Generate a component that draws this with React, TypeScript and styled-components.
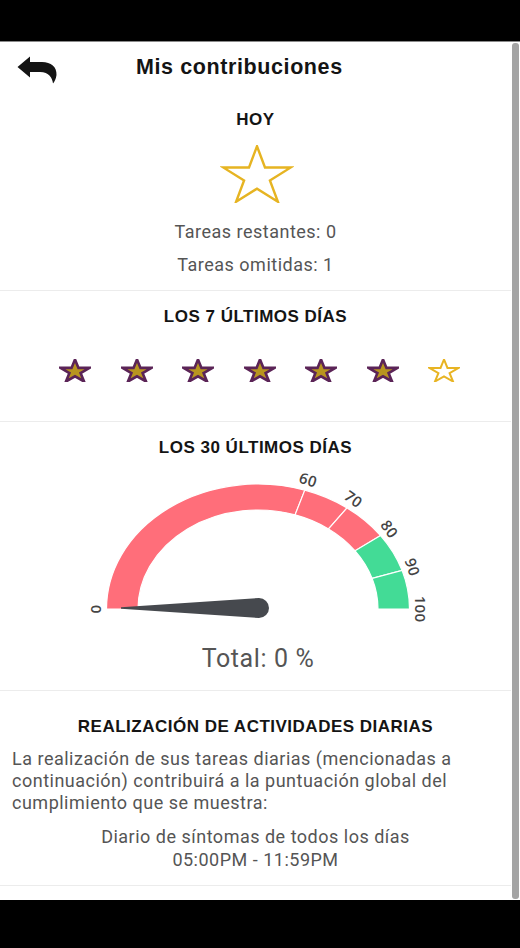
import styled, { createGlobalStyle } from "styled-components";

const GlobalStyle = createGlobalStyle`
  html, body {
    margin: 0;
    background: #000;
  }
  body {
    font-family: Roboto, "Liberation Sans", sans-serif;
  }
`;

const Screen = styled.div`
  margin-top: 41px;
  height: 859px;
  box-sizing: border-box;
  background: #fff;
  border-top: 1px solid #8a8a8a;
  display: flex;
  overflow: hidden;
`;

const Content = styled.main`
  flex: 1;
  min-width: 0;
`;

const ScrollTrack = styled.div`
  width: 9px;
  padding: 1px;
  box-sizing: border-box;
`;

const ScrollThumb = styled.div`
  width: 7px;
  height: 100%;
  border-radius: 3px;
  background: #a4a4a4;
`;

const Header = styled.header`
  height: 50px;
  display: flex;
  align-items: center;
  padding-left: 17px;
  gap: 79px;
`;

const BackButton = styled.button`
  border: 0;
  background: none;
  padding: 0;
  margin-top: 5px;
  display: flex;
  cursor: pointer;
`;

const Title = styled.h1`
  margin: 0;
  font-family: "Liberation Sans", Arial, sans-serif;
  font-size: 21.5px;
  letter-spacing: 0.6px;
  font-weight: 700;
  color: #141414;
`;

const Section = styled.section<{ $pt: number; $pb: number }>`
  border-bottom: 1px solid #ececec;
  padding: ${(p) => p.$pt}px 12px ${(p) => p.$pb}px;
  display: flex;
  flex-direction: column;
`;

const SectionTitle = styled.h2`
  margin: 0;
  height: 20px;
  line-height: 20px;
  text-align: center;
  font-family: "Liberation Sans", Arial, sans-serif;
  font-size: 17px;
  letter-spacing: 0.5px;
  font-weight: 700;
  color: #141414;
`;

const BigStarWrap = styled.div`
  margin: 15px auto 0;
  display: flex;
  transform: translateX(1px);
`;

const Stat = styled.p<{ $mt: number }>`
  margin: ${(p) => p.$mt}px 0 0;
  line-height: 20px;
  text-align: center;
  font-size: 18px;
  letter-spacing: 0.5px;
  color: #555;
`;

const StarRow = styled.div`
  margin-top: 32px;
  display: flex;
  justify-content: center;
  gap: 29.5px;
  padding-left: 8px;
`;

const GaugeBox = styled.div`
  margin: 2px -12px 0;
  display: flex;
`;

const Total = styled.div`
  margin-top: 15px;
  line-height: 28px;
  text-align: center;
  font-size: 25px;
  letter-spacing: 0.6px;
  color: #555;
  padding-left: 5px;
`;

const Paragraph = styled.p`
  margin: 11px 0 0;
  font-size: 18px;
  letter-spacing: 0.5px;
  line-height: 22px;
  color: #555;
`;

const Schedule = styled.div`
  margin-top: 11px;
  text-align: center;
  font-size: 18px;
  letter-spacing: 0.5px;
  line-height: 23px;
  color: #555;
`;

const STAR_POINTS =
  "50,0 61.23,34.55 97.55,34.55 68.17,55.9 79.39,90.45 50,69.1 20.61,90.45 31.83,55.9 2.45,34.55 38.77,34.55";

function Star({
  w,
  h,
  fill,
  stroke,
  sw,
}: {
  w: number;
  h: number;
  fill: string;
  stroke: string;
  sw: number;
}) {
  return (
    <svg width={w} height={h} viewBox="-2 -2 104 94.5" preserveAspectRatio="none">
      <polygon
        points={STAR_POINTS}
        fill={fill}
        stroke={stroke}
        strokeWidth={sw}
        strokeLinejoin="miter"
        vectorEffect="non-scaling-stroke"
      />
    </svg>
  );
}

function BackArrow() {
  return (
    <svg width="40" height="28" viewBox="0 0 40 28">
      <path
        d="M0.5 11 L13 0.5 L13 6 L25 6 C34 6 40 11 39.5 19 C39 23 37.5 25.5 36 27.5 C35.5 22 32 16 23 16 L13 16 L13 21.5 Z"
        fill="#141414"
      />
    </svg>
  );
}

const CX = 258;
const CY = 149;
const RX = 151.5;
const RY = 125;
const IRX = 120;
const IRY = 99;

const pt = (v: number, rx: number, ry: number) => {
  const a = Math.PI * (1 - v / 100);
  return [CX + rx * Math.cos(a), CY - ry * Math.sin(a)];
};

const segPath = (a: number, b: number) => {
  const [x1, y1] = pt(a, RX, RY);
  const [x2, y2] = pt(b, RX, RY);
  const [x3, y3] = pt(b, IRX, IRY);
  const [x4, y4] = pt(a, IRX, IRY);
  return `M${x1} ${y1} A${RX} ${RY} 0 0 1 ${x2} ${y2} L${x3} ${y3} A${IRX} ${IRY} 0 0 0 ${x4} ${y4} Z`;
};

const segments = [
  { from: 0, to: 60, color: "#ff6e7a" },
  { from: 60, to: 70, color: "#ff6e7a" },
  { from: 70, to: 80, color: "#ff6e7a" },
  { from: 80, to: 90, color: "#43db96" },
  { from: 90, to: 100, color: "#43db96" },
];

const labels = [0, 60, 70, 80, 90, 100];

function Gauge() {
  return (
    <svg width="511" height="170" viewBox="0 0 511 170">
      {segments.map((s) => (
        <path key={s.from} d={segPath(s.from, s.to)} fill={s.color} stroke="#fff" strokeWidth="1.2" />
      ))}
      {labels.map((v) => {
        const [x, y] = pt(v, RX + 11.5, RY + 11.5);
        const r = 1.8 * v - 90;
        return (
          <text
            key={v}
            x={x}
            y={y}
            transform={`rotate(${r} ${x} ${y})`}
            textAnchor="middle"
            dominantBaseline="central"
            fontFamily="'Open Sans', Roboto, sans-serif"
            fontWeight="600"
            fontSize="15"
            letterSpacing="0.3"
            fill="#444"
          >
            {v}
          </text>
        );
      })}
      <path d="M121 147.2 L259 138 A10 10 0 1 1 259 158 L121 148.8 Z" fill="#46494e" />
    </svg>
  );
}

export default function App() {
  return (
    <>
      <GlobalStyle />
      <Screen>
        <Content>
          <Header>
            <BackButton aria-label="Volver">
              <BackArrow />
            </BackButton>
            <Title>Mis contribuciones</Title>
          </Header>

          <Section $pt={18} $pb={15}>
            <SectionTitle>HOY</SectionTitle>
            <BigStarWrap>
              <Star w={74} h={58} fill="#fff" stroke="#e6b422" sw={2.4} />
            </BigStarWrap>
            <Stat $mt={19}>Tareas restantes: 0</Stat>
            <Stat $mt={13}>Tareas omitidas: 1</Stat>
          </Section>

          <Section $pt={16} $pb={39}>
            <SectionTitle>LOS 7 ÚLTIMOS DÍAS</SectionTitle>
            <StarRow>
              {[0, 1, 2, 3, 4, 5].map((i) => (
                <Star key={i} w={32} h={23} fill="#b8951f" stroke="#5b2457" sw={2.6} />
              ))}
              <Star w={32} h={23} fill="#fff" stroke="#e8b423" sw={2} />
            </StarRow>
          </Section>

          <Section $pt={16} $pb={17}>
            <SectionTitle>LOS 30 ÚLTIMOS DÍAS</SectionTitle>
            <GaugeBox>
              <Gauge />
            </GaugeBox>
            <Total>Total: 0 %</Total>
          </Section>

          <Section $pt={26} $pb={14}>
            <SectionTitle>REALIZACIÓN DE ACTIVIDADES DIARIAS</SectionTitle>
            <Paragraph>
              La realización de sus tareas diarias (mencionadas a continuación) contribuirá a la
              puntuación global del cumplimiento que se muestra:
            </Paragraph>
            <Schedule>
              <div>Diario de síntomas de todos los días</div>
              <div>05:00PM - 11:59PM</div>
            </Schedule>
          </Section>
        </Content>
        <ScrollTrack>
          <ScrollThumb />
        </ScrollTrack>
      </Screen>
    </>
  );
}
